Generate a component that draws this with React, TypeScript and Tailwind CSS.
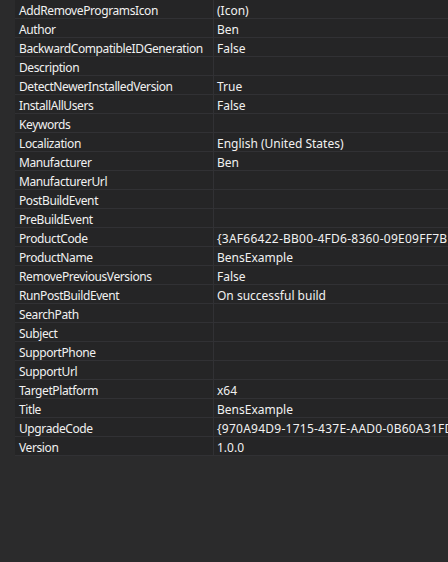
const rows: [string, string][] = [
  ['AddRemoveProgramsIcon', '(Icon)'],
  ['Author', 'Ben'],
  ['BackwardCompatibleIDGeneration', 'False'],
  ['Description', ''],
  ['DetectNewerInstalledVersion', 'True'],
  ['InstallAllUsers', 'False'],
  ['Keywords', ''],
  ['Localization', 'English (United States)'],
  ['Manufacturer', 'Ben'],
  ['ManufacturerUrl', ''],
  ['PostBuildEvent', ''],
  ['PreBuildEvent', ''],
  ['ProductCode', '{3AF66422-BB00-4FD6-8360-09E09FF7B1C4}'],
  ['ProductName', 'BensExample'],
  ['RemovePreviousVersions', 'False'],
  ['RunPostBuildEvent', 'On successful build'],
  ['SearchPath', ''],
  ['Subject', ''],
  ['SupportPhone', ''],
  ['SupportUrl', ''],
  ['TargetPlatform', 'x64'],
  ['Title', 'BensExample'],
  ['UpgradeCode', '{970A94D9-1715-437E-AAD0-0B60A31FD2E7}'],
  ['Version', '1.0.0']
];

const App = () => {
  return (
    <div
      className="w-[448px] h-[562px] overflow-hidden bg-[#2b2b2c] text-[#f1f1f1] text-[12px]"
      style={{ fontFamily: '"Noto Sans", "Open Sans", sans-serif' }}
    >
      <div className="flex flex-col">
        {rows.map(([name, value]) => (
          <div key={name} className="flex h-[19px]">
            <div className="w-[15px] shrink-0 bg-[#2b2b2c]" />
            <div className="w-[199px] shrink-0 flex items-center pl-[4px] pt-[3px] tracking-[-0.4px] bg-[#252526] border-b border-r border-[#313134] whitespace-nowrap overflow-hidden leading-none">
              {name}
            </div>
            <div
              className={
                value.startsWith('{')
                  ? 'flex-1 min-w-0 flex items-center pl-[3px] pt-[3px] tracking-[0.25px] bg-[#252526] border-b border-[#313134] whitespace-nowrap overflow-hidden leading-none'
                  : 'flex-1 min-w-0 flex items-center pl-[3px] pt-[3px] bg-[#252526] border-b border-[#313134] whitespace-nowrap overflow-hidden leading-none'
              }
            >
              {value}
            </div>
          </div>
        ))}
      </div>
    </div>
  );
};

export default App;
